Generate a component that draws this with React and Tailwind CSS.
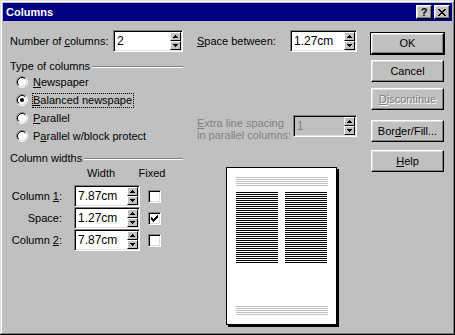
import React from 'react';

const raised =
  'bg-[#c0c0c0] border border-t-white border-l-white border-r-black border-b-black shadow-[inset_-1px_-1px_#808080,inset_1px_1px_#dfdfdf]';
const sunken =
  'border border-t-[#808080] border-l-[#808080] border-r-white border-b-white shadow-[inset_1px_1px_#000,inset_-1px_-1px_#dfdfdf]';

function Pixels({ rows, color = '#000' }) {
  return (
    <svg width={rows[0].length} height={rows.length} shapeRendering="crispEdges">
      {rows.flatMap((r, y) =>
        r.split('').map((c, x) =>
          c === '#' ? <rect key={`${x}-${y}`} x={x} y={y} width="1" height="1" fill={color} /> : null
        )
      )}
    </svg>
  );
}

const arrowUp = ['..#..', '.###.', '#####'];
const arrowDown = ['#####', '.###.', '..#..'];
const closeX = ['##....##', '.##..##.', '..####..', '...##...', '..####..', '.##..##.', '##....##'];
const checkMark = ['......#', '.....##', '#...###', '##.###.', '#####..', '.###...', '..#....'];

function U({ children }) {
  return <span className="underline underline-offset-[1px]">{children}</span>;
}

function Spin() {
  return (
    <div className="flex flex-col w-[11px]">
      {[arrowUp, arrowDown].map((a, i) => (
        <div
          key={i}
          className="flex-1 flex items-center justify-center bg-[#c0c0c0] border border-t-white border-l-white border-r-black border-b-black"
        >
          <Pixels rows={a} />
        </div>
      ))}
    </div>
  );
}

function Field({ value, width, disabled }) {
  return (
    <div
      className={`flex h-[22px] p-[1px] ${width} ${sunken} ${
        disabled ? 'bg-[#c0c0c0] text-[#808080]' : 'bg-white text-black'
      }`}
    >
      <span className="flex-1 pl-[2px] leading-[18px] text-[12px]">{value}</span>
      <Spin />
    </div>
  );
}

function Legend({ children }) {
  return (
    <div className="flex items-center h-[13px]">
      <span>{children}</span>
      <div className="flex-1 ml-[2px] mr-[3px] h-[2px] border-t border-t-[#808080] border-b border-b-white" />
    </div>
  );
}

function RadioDot({ checked }) {
  return (
    <svg width="12" height="12" viewBox="0 0 12 12">
      <circle cx="6" cy="6" r="4.5" fill="#fff" />
      <path d="M2.11 9.89A5.5 5.5 0 0 1 9.89 2.11" fill="none" stroke="#808080" />
      <path d="M9.89 2.11A5.5 5.5 0 0 1 2.11 9.89" fill="none" stroke="#fff" />
      <path d="M2.82 9.18A4.5 4.5 0 0 1 9.18 2.82" fill="none" stroke="#000" />
      <path d="M9.18 2.82A4.5 4.5 0 0 1 2.82 9.18" fill="none" stroke="#dfdfdf" />
      {checked && <circle cx="6" cy="6" r="2" fill="#000" />}
    </svg>
  );
}

function Radio({ checked, focus, children }) {
  return (
    <div className="flex items-center h-[18px]">
      <RadioDot checked={checked} />
      <span
        className={`ml-[4px] pr-[1px] leading-[13px] border ${
          focus ? 'border-dotted border-black' : 'border-transparent'
        }`}
      >
        {children}
      </span>
    </div>
  );
}

function Check({ checked }) {
  return (
    <div className={`w-[13px] h-[13px] bg-white flex items-center justify-center ${sunken}`}>
      {checked && <Pixels rows={checkMark} />}
    </div>
  );
}

function Button({ children, isDefault, disabled, className = '' }) {
  const inner = (
    <div
      className={`flex items-center justify-center w-full h-full ${raised} ${
        disabled ? 'text-[#808080] [text-shadow:1px_1px_0_#fff]' : ''
      }`}
    >
      {children}
    </div>
  );
  if (isDefault) {
    return <div className={`w-[75px] h-[23px] border border-black ${className}`}>{inner}</div>;
  }
  return <div className={`w-[73px] h-[22px] ml-[1px] ${className}`}>{inner}</div>;
}

function PagePreview() {
  const lines = (y0, n, x, w, fill) =>
    Array.from({ length: n }, (_, i) => (
      <rect key={`${x}-${y0}-${i}`} x={x} y={y0 + i * 2} width={w} height="1" fill={fill} />
    ));
  return (
    <svg width="113" height="160" viewBox="0 0 113 160" shapeRendering="crispEdges">
      <rect x="2" y="2" width="111" height="158" fill="#000" />
      <rect x="0.5" y="0.5" width="110" height="157" fill="#fff" stroke="#000" />
      {lines(10, 5, 10, 92, '#c0c0c0')}
      {lines(25, 36, 10, 42, '#000')}
      {lines(25, 36, 59, 42, '#000')}
      {lines(139, 5, 10, 92, '#c0c0c0')}
    </svg>
  );
}

export default function App() {
  return (
    <div className="w-[455px] h-[335px] bg-[#c0c0c0] p-[3px] text-[11px] text-black font-['Liberation_Sans',Arial,sans-serif] shadow-[inset_-1px_-1px_#000,inset_1px_1px_#dfdfdf,inset_-2px_-2px_#808080,inset_2px_2px_#fff] select-none">
      <div className="h-[18px] bg-[#000080] flex items-center pl-[3px] pr-[2px]">
        <span className="flex-1 text-white font-bold text-[11px]">Columns</span>
        <div className={`w-[16px] h-[14px] flex items-center justify-center font-bold text-[11px] leading-none ${raised}`}>
          ?
        </div>
        <div className={`w-[16px] h-[14px] ml-[2px] flex items-center justify-center ${raised}`}>
          <Pixels rows={closeX} />
        </div>
      </div>

      <div className="flex px-[7px] pt-[9px]">
        {/* left column */}
        <div className="w-[176px] flex flex-col">
          <div className="flex items-center h-[22px]">
            <span className="w-[103px]">
              Number of <U>c</U>olumns:
            </span>
            <Field value="2" width="w-[70px]" />
          </div>

          <div className="mt-[8px]">
            <Legend>Type of columns</Legend>
          </div>
          <div className="pl-[6px]">
            <Radio>
              <U>N</U>ewspaper
            </Radio>
            <Radio checked focus>
              <U>B</U>alanced newspape
            </Radio>
            <Radio>
              <U>P</U>arallel
            </Radio>
            <Radio>
              P<U>a</U>rallel w/block protect
            </Radio>
          </div>

          <div className="mt-[7px]">
            <Legend>Column widths</Legend>
          </div>
          <div className="flex items-center h-[13px] mt-[2px]">
            <div className="w-[64px]" />
            <span className="w-[54px] text-center">Width</span>
            <span className="w-[30px] ml-[9px] text-center">Fixed</span>
          </div>
          <div className="mt-[5px] flex flex-col">
            {[
              [<>Column <U>1</U>:</>, '7.87cm', false],
              ['Space:', '1.27cm', true],
              [<>Column <U>2</U>:</>, '7.87cm', false],
            ].map(([label, val, fixed], i) => (
              <div key={i} className="flex items-center h-[22px]">
                <span className="w-[52px] text-right">{label}</span>
                <div className="ml-[12px]">
                  <Field value={val} width="w-[66px]" />
                </div>
                <div className="ml-[8px]">
                  <Check checked={fixed} />
                </div>
              </div>
            ))}
          </div>
        </div>

        {/* middle column */}
        <div className="w-[160px] ml-[11px] flex flex-col">
          <div className="flex items-center h-[22px]">
            <span className="w-[93px]">
              <U>S</U>pace between:
            </span>
            <Field value="1.27cm" width="w-[67px]" />
          </div>
          <div className="flex items-start mt-[63px]">
            <span className="w-[96px] mt-[2px] leading-[12px] text-[#808080]">
              <U>E</U>xtra line spacing
              <br />
              in parallel columns:
            </span>
            <Field value="1" width="w-[64px]" disabled />
          </div>
          <div className="mt-[26px] ml-[29px]">
            <PagePreview />
          </div>
        </div>

        {/* buttons */}
        <div className="ml-[13px] mt-[2px] flex flex-col">
          <Button isDefault>OK</Button>
          <Button className="mt-[5px]">Cancel</Button>
          <Button className="mt-[6px]" disabled>
            <U>D</U>iscontinue
          </Button>
          <Button className="mt-[10px]">
            Bor<U>d</U>er/Fill...
          </Button>
          <Button className="mt-[8px]">
            <U>H</U>elp
          </Button>
        </div>
      </div>
    </div>
  );
}
